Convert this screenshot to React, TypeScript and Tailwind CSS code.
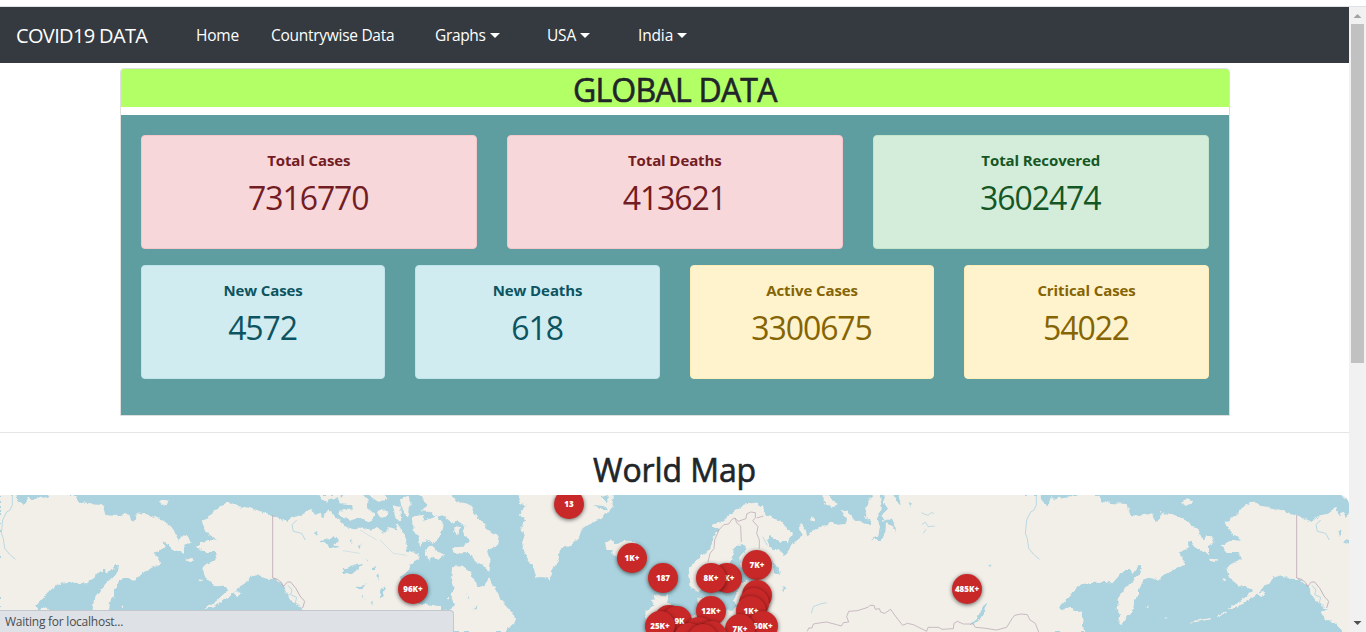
import React from "react";

const Caret = () => (
  <svg width="10" height="5" viewBox="0 0 10 5" className="shrink-0">
    <path d="M0 0H10L5 5Z" fill="#fff" />
  </svg>
);

const navItems = [
  { label: "Home", box: "w-[75px]", text: "tracking-[-0.2px]", caret: false },
  { label: "Countrywise Data", box: "w-[164px]", text: "tracking-[-0.28px]", caret: false },
  { label: "Graphs", box: "w-[112px]", text: "tracking-[-0.35px]", caret: true },
  { label: "USA", box: "w-[91px]", text: "tracking-[-0.2px]", caret: true },
  { label: "India", box: "w-[60px]", text: "tracking-[-0.15px]", caret: true },
];

type Tone = "danger" | "success" | "info" | "warning";

const tones: Record<Tone, string> = {
  danger: "bg-[#f8d7da] border-[#f5c6cb] text-[#721c24]",
  success: "bg-[#d4edda] border-[#c3e6cb] text-[#155724]",
  info: "bg-[#d1ecf1] border-[#bee5eb] text-[#0c5460]",
  warning: "bg-[#fff3cd] border-[#ffeeba] text-[#856404]",
};

const Stat = ({ title, value, tone }: { title: string; value: string; tone: Tone }) => (
  <div className={`h-[114px] rounded border pt-3 text-center ${tones[tone]}`}>
    <div className="text-[15px] leading-6 font-bold tracking-[-0.1px]">{title}</div>
    <div className="mt-[7px] pr-px text-[32px] leading-[38px] tracking-[-1.1px]">{value}</div>
  </div>
);

type Pin = { x: number; y: number; t?: string };

const pins: Pin[] = [
  { x: 569, y: 9, t: "13" },
  { x: 413, y: 94, t: "96K+" },
  { x: 632, y: 63, t: "1K+" },
  { x: 663, y: 83, t: "187" },
  { x: 727, y: 83, t: "4K+" },
  { x: 711, y: 83, t: "8K+" },
  { x: 757, y: 70, t: "7K+" },
  { x: 757, y: 100 },
  { x: 754, y: 108 },
  { x: 751, y: 116, t: "1K+" },
  { x: 711, y: 116, t: "12K+" },
  { x: 669, y: 125 },
  { x: 677, y: 126, t: "9K" },
  { x: 660, y: 131, t: "25K+" },
  { x: 763, y: 131, t: "50K+" },
  { x: 740, y: 134, t: "7K+" },
  { x: 699, y: 137 },
  { x: 689, y: 143 },
  { x: 712, y: 141 },
  { x: 703, y: 144 },
  { x: 967, y: 94, t: "485K+" },
];

const Pacific = () => (
  <g>
    <path d="M0 15H50L52 30 70 46 78 30 85 22 95 28 120 24 145 22 145 15H225L235 35 270 40 308 42 316 75 345 78 385 70 388 88 400 95 408 85 410 66 450 74 490 92 520 118 536 152 548 136 560 138 572 155 552 172 552 192 530 182 510 170 498 153 492 155 493 172 475 182 460 188 478 205 480 225 440 240 402 272 385 262 360 268 352 288 342 298 342 318 330 334 328 360 310 376 302 392 292 406 286 400 288 375 278 358 282 325 300 300 322 276 350 250 354 225 345 226 322 256 318 240 300 240 290 252 265 280 215 278 170 282 105 350 118 362 140 350 145 362 172 365 180 426H0Z" />
    <path d="M605 95 640 72 655 52 685 35 700 45 750 55 800 70 818 75 862 96 885 78 912 68 932 54 945 75 962 68 968 85 985 58 995 75 1004 76 1022 92V426H958L943 410 923 395 900 385 890 365 908 356 885 344 870 325 850 288 830 268 800 266 768 256 750 262 735 280 718 290 705 308 668 332 640 352 612 358 650 332 684 300 672 290 650 292 630 275 616 262 607 238 618 222 650 210 645 186 605 186 590 168 605 158 625 150 650 152 640 140 622 132 612 115Z" />
    <path d="M474 38 486 28 505 32 506 40 485 45ZM555 206 580 208 575 216 558 212ZM595 268 607 270 600 275ZM702 310 718 302 722 312 708 322ZM154 362H164L176 426H160Z" />
    <path d="M950 15H1022V32L1000 24 978 36Z" />
    <path
      d="M956 154 985 148 1000 138 1018 150 1000 160 1016 172 988 178 985 164ZM942 125 952 120 950 138Z"
      fill="#aad3df"
    />
    <path d="M605 366 580 380M560 386 500 396M424 382 427 386M366 348 372 352" fill="none" stroke="#f2efe9" strokeWidth="4" />
  </g>
);

const PacificLines = () => (
  <g fill="none" strokeWidth="2.4">
    <path
      d="M818 75V264L832 268 845 278 850 290 862 276 872 276 888 296 900 318 914 334 908 354"
      stroke="#b9a6b2"
    />
    <path
      d="M864 286 876 300 872 314 890 322 886 338 900 348M890 90 876 104 880 124 905 130 916 150M37 15V45L30 60 20 66 8 90 4 130 10 145 14 175 28 192 46 208"
      stroke="#aad3df"
    />
  </g>
);

const WorldMap = () => (
  <svg width="1349" height="137" viewBox="0 15 4047 411" className="block" preserveAspectRatio="none">
    <defs>
      <filter id="coast" x="0" y="0" width="100%" height="100%" colorInterpolationFilters="sRGB">
        <feTurbulence type="fractalNoise" baseFrequency="0.06" numOctaves="3" seed="4" />
        <feDisplacementMap in="SourceGraphic" scale="15" xChannelSelector="R" yChannelSelector="G" />
        <feGaussianBlur stdDeviation="1.1" />
      </filter>
    </defs>
    <rect y="15" width="4047" height="411" fill="#aad3df" />
    <g filter="url(#coast)" fill="#f2efe9">
      <rect x="-30" y="-15" width="4107" height="471" fill="#aad3df" />
      <Pacific />
      <g transform="translate(1020 0)">
        <path d="M-2 90 20 112 45 118 70 112 90 122 112 108 132 128 150 112 168 118 172 100 185 120 200 150 198 185 236 190 235 208 212 222 204 244 180 260 200 320 240 340 300 348V362H325L345 348 332 318 344 292 332 268 338 228 368 230 392 248 412 288 436 292 445 260 462 290 482 328 520 370 528 392 510 410 495 426H-2Z" />
        <path d="M15 5H60L86 32 82 52 108 78 90 98 55 84 28 92 0 78 -2 62 40 58 30 42 -2 40V28Z" />
        <path d="M82 5H130L146 26 118 36 96 26ZM110 66 140 60 148 72 126 84ZM158 46 180 50 184 96 168 88ZM180 25 205 18 212 40 205 80 186 64Z" />
        <path d="M216 82 250 78 248 92 288 80 308 96 304 130 282 158 258 148 240 168 236 142 218 116ZM258 180 275 165 292 188 315 196 300 208 280 200 265 212ZM344 108 360 112 355 132 342 126ZM232 5H330L350 36 378 40 396 48 408 80 430 96 440 116 476 140 470 168 440 180 452 216 448 246 430 224 404 216 396 196 372 186 340 190 336 172 374 170 386 148 370 128 376 108 352 92 336 100 310 76 290 80 270 66 244 64 262 42Z" />
        <path d="M528 5H818V50L790 82 728 114 716 146 692 166 660 176 656 208 640 238 630 270 612 262 590 262 582 236 562 210 546 160 554 142 544 116 556 88 536 72 560 48 540 38Z" />
        <path d="M795 158 812 148 828 164 850 152 872 152 892 160 890 196 848 206 812 192 824 182 800 178Z" />
        <path d="M960 318 985 315 980 332 996 345 990 360 960 366 918 376 920 360 945 345 935 335ZM318 324 328 320 325 332Z" />
        <g fill="#aad3df">
          <path d="M8 238 30 230 66 222 56 236 32 254 12 252ZM46 292 82 280 60 298ZM124 300 136 282 130 320 116 328ZM98 232 108 226 104 240ZM112 260 120 250 118 270ZM30 150 38 146 36 160ZM90 340 98 332 97 348ZM64 320 72 314 70 330ZM74 205 84 208 80 214ZM54 168 62 160 60 174ZM400 352 412 346 404 362ZM380 324 384 312 388 326Z" />
          <path d="M760 45 790 48 806 58 780 56ZM780 22 800 36 808 20 795 18ZM398 246 410 276 418 266Z" />
        </g>
      </g>
      <g transform="translate(1860 0)">
        <path d="M1214 5H766L742 38 738 62 735 80 752 92 748 106 720 94 700 88 682 62 662 56 670 76 684 92 676 102 652 104 640 95 600 112 580 124 562 136 556 118 542 100 536 112 548 138 520 160 505 182 492 198 480 178 455 176 440 150 450 138 480 156 504 156 516 132 482 92 440 76 428 52 408 38 370 44 330 74 312 90 276 106 296 118 284 136 270 176 236 204 206 238 212 292 236 304 262 284 290 300 312 272 330 240 330 220 342 178 362 162 378 168 374 186 358 204 360 226 420 262 362 280 340 330 356 350 328 362 300 360 290 320 232 320 234 370 180 400 140 440H1214Z" />
        <path d="M604 5 630 18 650 46 640 52 616 40ZM572 84 582 80 588 92 576 96ZM98 315 145 320 138 345 176 390V426H80L76 366 104 344Z" />
        <g fill="#aad3df">
          <path d="M778 5H790L792 40 804 56 788 72 790 92 812 86 826 104 828 124 818 108 798 100 796 128 784 150 752 150 774 140 780 110 772 80 786 56ZM820 15H836L842 42 834 38ZM456 210 476 236 480 256 462 246ZM484 288 496 294 490 304ZM436 220 446 228 438 244ZM866 38 876 44 870 50Z" />
          <path d="M1050 402 1072 384 1086 350 1098 342 1096 364 1080 386 1060 402ZM1108 215 1118 222 1108 228ZM1246 356 1260 354 1254 362Z" />
        </g>
      </g>
      <g transform="translate(3072 0)">
        <Pacific />
      </g>
    </g>
    <PacificLines />
    <g transform="translate(3072 0)">
      <PacificLines />
    </g>
    <path
      d="M1028 182 1080 190M1140 150 1180 190 1220 196M1080 120 1130 150"
      fill="none"
      stroke="#c3dde2"
      strokeWidth="2"
    />
    <g transform="translate(1860 0)" fill="none" strokeWidth="2.2">
      <path
        d="M904 68 912 72 924 76 934 68 942 70M906 104 916 96 924 110 944 108M910 130 918 118M574 370 580 350 600 342 620 338M428 140 442 166"
        stroke="#aad3df"
      />
      <path
        d="M264 216 270 190 282 176 284 150 298 118 312 104 326 102 336 88 345 84 350 98 362 108 364 156M345 84 354 94 378 86 380 72 392 66 406 68 406 84 398 92 414 110 410 130 418 150 418 176M410 84 430 78"
        stroke="#b9a6b2"
      />
      <path
        d="M562 424 566 414 576 414 580 402 604 398 620 396 650 404 664 408 670 398 686 396 680 380 686 364 712 362 744 352 750 346 762 346 766 358 778 356 782 366 794 370 812 358 826 378 848 406 862 400 880 404 900 414 920 424 924 412 956 412 966 418 1000 416 1002 400 1012 394 1030 402 1060 402 1066 412 1090 414 1130 420 1160 412 1176 386 1184 376 1204 372 1222 374 1230 390 1246 400 1256 426"
        stroke="#b9a6b2"
      />
    </g>
  </svg>
);

export default function App() {
  return (
    <div className="flex h-[632px] w-[1366px] overflow-hidden bg-white font-['Open_Sans','Noto_Sans',sans-serif] text-[#212529]">
      <div className="relative flex w-[1349px] shrink-0 flex-col">
        <div className="h-[7px] shrink-0 border-b border-[#dee1e6]" />
        <nav className="flex h-14 shrink-0 items-center bg-[#343a40] pt-px pl-4 text-white">
          <div className="w-[180px] text-[20px] tracking-[-0.65px] whitespace-nowrap">COVID19 DATA</div>
          {navItems.map((n) => (
            <div key={n.label} className={`flex items-center gap-1 text-[15.5px] whitespace-nowrap ${n.box}`}>
              <span className={n.text}>{n.label}</span>
              {n.caret && <Caret />}
            </div>
          ))}
        </nav>

        <section className="mt-[5px] ml-[119.8px] flex h-[348px] w-[1110px] shrink-0 flex-col overflow-hidden rounded-t border border-[#dfdfdf]">
          <h2 className="h-[38px] shrink-0 bg-[#b2ff66] text-center text-[32px] leading-[41px] font-medium tracking-[-0.75px] [-webkit-text-stroke:0.6px_#212529]">
            GLOBAL DATA
          </h2>
          <div className="mt-2 flex-1 bg-[#5f9ea0] p-5">
            <div className="grid grid-cols-3 gap-[30px]">
              <Stat title="Total Cases" value="7316770" tone="danger" />
              <Stat title="Total Deaths" value="413621" tone="danger" />
              <Stat title="Total Recovered" value="3602474" tone="success" />
            </div>
            <div className="mt-4 grid grid-cols-4 gap-[30px]">
              <Stat title="New Cases" value="4572" tone="info" />
              <Stat title="New Deaths" value="618" tone="info" />
              <Stat title="Active Cases" value="3300675" tone="warning" />
              <Stat title="Critical Cases" value="54022" tone="warning" />
            </div>
          </div>
        </section>

        <hr className="mt-4 shrink-0 border-[#e5e5e5]" />
        <h2 className="mt-4 h-[46px] shrink-0 text-center text-[32px] leading-[41px] font-medium tracking-[-0.1px] [-webkit-text-stroke:0.6px_#212529]">
          World Map
        </h2>

        <div className="relative h-[137px] shrink-0 overflow-hidden rounded-tr-[10px]">
          <WorldMap />
          {pins.map((p, i) => (
            <div
              key={i}
              className="absolute flex size-[30px] -translate-x-1/2 -translate-y-1/2 items-center justify-center rounded-full bg-[#c82828] text-[8px] font-extrabold text-white shadow-[0_1px_4px_rgba(0,0,0,0.6)]"
              style={{ left: p.x, top: p.y }}
            >
              {p.t && <span className={p.t === "9K" ? "pl-[5px]" : ""}>{p.t}</span>}
            </div>
          ))}
        </div>

        <div className="absolute bottom-0 left-0 h-[22px] w-[454px] rounded-tr border-t border-r border-[#c3c8ce] bg-[#dee1e6] pl-[5px] text-[12px] leading-[22px] tracking-[-0.25px] text-[#4a4d51]">
          Waiting for localhost...
        </div>
      </div>

      <div className="flex w-[17px] shrink-0 flex-col items-center bg-[#f1f1f1]">
        <div className="h-[7px] w-full border-b border-[#dee1e6] bg-white" />
        <svg width="17" height="17" viewBox="0 0 17 17">
          <path d="M4.5 11H12.5L8.5 7Z" fill="#a3a3a3" />
        </svg>
        <div className="h-[339px] w-[13px] bg-[#c1c1c1]" />
        <svg width="17" height="17" viewBox="0 0 17 17" className="mt-auto">
          <path d="M4.5 6H12.5L8.5 10Z" fill="#505050" />
        </svg>
      </div>
    </div>
  );
}
